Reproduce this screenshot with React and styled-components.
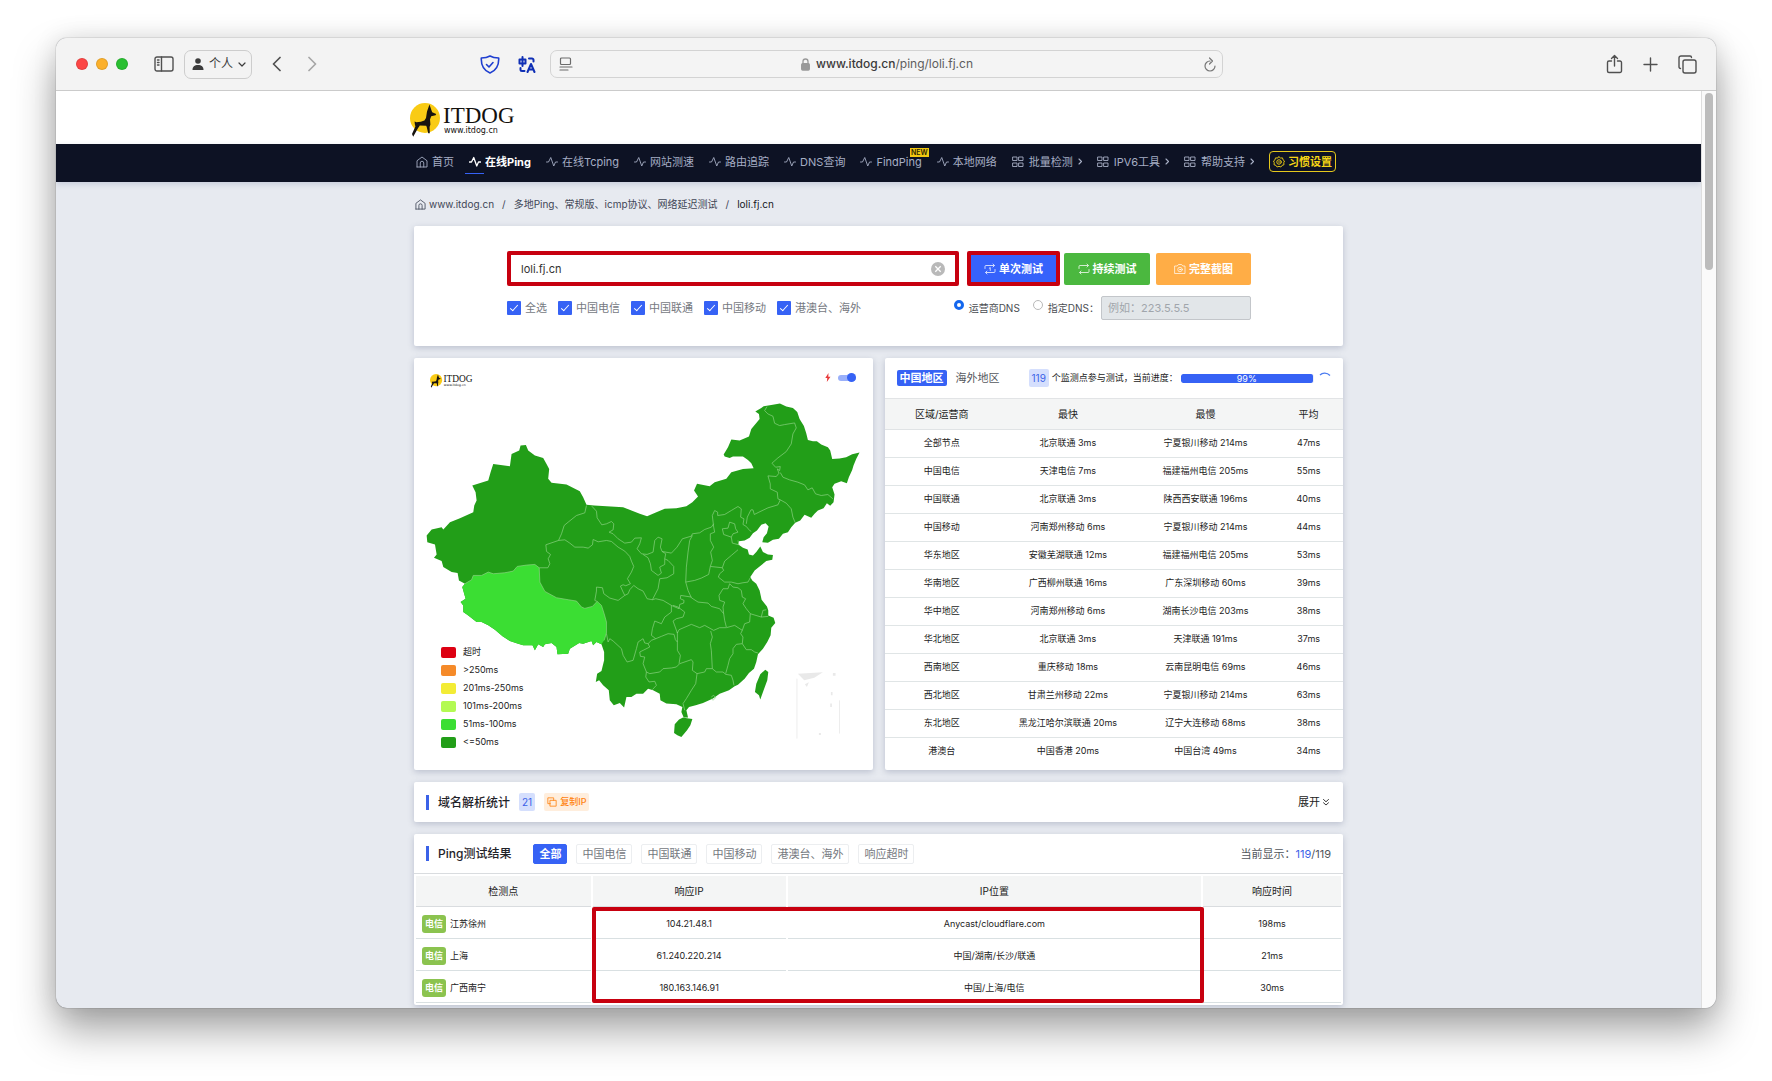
import React from "react";
import styled, { createGlobalStyle, css } from "styled-components";

const BLUE = "#3662f5";
const RED = "#c7000f";

const GlobalStyle = createGlobalStyle`
  *, *::before, *::after { box-sizing: border-box; }
  html, body, #root { height: 100%; }
  body {
    margin: 0;
    background: #fff;
    color: #222;
    font-family: Inter, "Noto Sans CJK SC", sans-serif;
    font-size: 11px;
    line-height: 16px;
    overflow: hidden;
  }
  button, input { font: inherit; color: inherit; }
  button { border: 0; background: none; padding: 0; }
  a { color: inherit; text-decoration: none; }
  svg { display: block; flex: none; }
`;

/* ---------- browser window ---------- */

const Desktop = styled.div`
  height: 100%;
  padding: 38px 56px 73px;
`;

const Window = styled.div`
  display: flex;
  flex-direction: column;
  height: 100%;
  overflow: hidden;
  border-radius: 11px;
  background: #e7eaf0;
  box-shadow: 0 0 1px rgba(0, 0, 0, 0.7), 0 0 24px rgba(0, 0, 0, 0.1), 0 22px 42px rgba(0, 0, 0, 0.36);
`;

const Toolbar = styled.header`
  display: grid;
  grid-template-columns: 1fr minmax(300px, 673px) 1fr;
  align-items: center;
  flex: none;
  height: 53px;
  border-bottom: 1px solid #cbcbcb;
  background: #f3f3f3;
`;

const LeftTools = styled.div`
  display: flex;
  align-items: center;
  gap: 10px;
  min-width: 0;
  padding: 0 14px 0 20px;
`;

const RightTools = styled.div`
  display: flex;
  align-items: center;
  justify-content: flex-end;
  gap: 20px;
  padding-right: 19px;
`;

const ToolButton = styled.button`
  display: flex;
  align-items: center;
  justify-content: center;
  color: ${(p) => p.$color || "#505050"};
`;

const Lights = styled.div`
  display: flex;
  gap: 8px;
  margin-right: 16px;
`;

const Light = styled.button`
  width: 12px;
  height: 12px;
  border-radius: 50%;
  border: 1px solid rgba(0, 0, 0, 0.1);
  background: ${(p) => p.$color};
`;

const Profile = styled.button`
  display: flex;
  align-items: center;
  gap: 5px;
  height: 29px;
  padding: 0 5px 0 7px;
  border: 1px solid #cdcdcd;
  border-radius: 7px;
  font-size: 12px;
  color: #3c3c3c;
`;

const History = styled.div`
  display: flex;
  gap: 27px;
  margin-left: 10px;
`;

const Extensions = styled.div`
  display: flex;
  align-items: center;
  gap: 18px;
  margin-left: auto;
`;

const AddressBar = styled.div`
  display: grid;
  grid-template-columns: 1fr auto 1fr;
  align-items: center;
  height: 28px;
  padding: 0 6px 0 8px;
  border: 1px solid #d3d3d3;
  border-radius: 7px;
  background: #f4f4f4;
  color: #6b6b6b;
`;

const Address = styled.span`
  display: flex;
  align-items: center;
  gap: 6px;
  font-size: 12px;
  color: #5d5d5d;
  b { font-weight: 500; color: #3a3a3a; }
`;

const AddressEnd = styled.span`
  display: flex;
  justify-content: flex-end;
`;

const Viewport = styled.div`
  display: flex;
  flex: 1;
  min-height: 0;
`;

const Page = styled.div`
  flex: 1;
  min-width: 0;
  overflow: hidden;
`;

const ScrollTrack = styled.div`
  flex: none;
  width: 15px;
  padding: 2px 3px;
  border-left: 1px solid #dedede;
  background: #fafafa;
`;

const ScrollThumb = styled.div`
  height: 177px;
  border-radius: 4px;
  background: #bcbcbc;
`;

/* ---------- site header ---------- */

const Container = styled.div`
  width: 100%;
  max-width: 929px;
  margin: 0 auto;
`;

const Brand = styled.div`
  display: flex;
  align-items: center;
  height: 53px;
  padding-top: 4px;
  background: #fff;
`;

const BrandLink = styled.a`
  display: flex;
  margin-left: -4px;
`;

const NavBar = styled.nav`
  background: #0d1224;
  box-shadow: 0 2px 6px rgba(60, 80, 130, 0.2);
`;

const NavList = styled(Container)`
  display: flex;
  align-items: center;
  gap: 15px;
  height: 38px;
  padding: 0 7px 3px 2px;
  white-space: nowrap;
`;

const NavItem = styled.a`
  position: relative;
  display: flex;
  align-items: center;
  gap: ${(p) => (p.$more ? 5 : 4)}px;
  color: #a6aec4;
  ${(p) =>
    p.$active &&
    css`
      color: #fff;
      font-weight: 700;
      &::after {
        content: "";
        position: absolute;
        left: -4px;
        bottom: -4px;
        width: 19px;
        height: 1px;
        background: ${BLUE};
      }
    `}
`;

const NewTag = styled.span`
  position: absolute;
  right: -7px;
  top: -6px;
  padding: 0 1px;
  background: #f2c811;
  color: #2b2500;
  font-size: 7px;
  font-weight: 600;
  line-height: 9px;
`;

const SettingsButton = styled.button`
  display: flex;
  align-items: center;
  gap: 3px;
  height: 21px;
  padding: 0 3px;
  margin-left: auto;
  border: 1px solid #e5c81c;
  border-radius: 4px;
  color: #f5d515;
  font-weight: 700;
`;

const Crumbs = styled(Container)`
  display: flex;
  align-items: center;
  gap: 8px;
  height: 44px;
  padding-left: 1px;
  font-size: 10px;
  color: #3f4656;
`;

const CrumbHome = styled.a`
  display: flex;
  align-items: center;
  gap: 3px;
`;

const CrumbHere = styled.span`
  color: #15181f;
`;

/* ---------- cards ---------- */

const Stack = styled(Container)`
  display: flex;
  flex-direction: column;
  gap: 12px;
`;

const Card = styled.section`
  border-radius: 2px;
  background: #fff;
  box-shadow: 0 2px 6px rgba(60, 70, 110, 0.25);
`;

const SearchCard = styled(Card)`
  padding: 25px 92px 26px 93px;
`;

const SearchRow = styled.form`
  display: flex;
  align-items: center;
`;

const SearchField = styled.label`
  display: flex;
  align-items: center;
  flex: 1;
  height: 35px;
  margin-right: 8px;
  padding: 0 10px;
  border: 4px solid ${RED};
  border-radius: 2px;
`;

const SearchInput = styled.input`
  flex: 1;
  min-width: 0;
  padding: 0;
  border: 0;
  outline: 0;
  color: #333;
`;

const ActionButton = styled.button`
  display: flex;
  align-items: center;
  justify-content: center;
  gap: 3px;
  width: ${(p) => p.$w}px;
  height: ${(p) => (p.$marked ? 35 : 32)}px;
  margin-left: ${(p) => p.$gap || 0}px;
  border: ${(p) => (p.$marked ? `4px solid ${RED}` : "0")};
  border-radius: 2px;
  background: ${(p) => p.$bg};
  color: #fff;
  font-weight: 700;
`;

const OptionRow = styled.div`
  display: flex;
  align-items: center;
  justify-content: space-between;
  margin-top: 10px;
`;

const Options = styled.div`
  display: flex;
  align-items: center;
  gap: ${(p) => p.$gap}px;
`;

const Option = styled.label`
  display: flex;
  align-items: center;
  gap: 4px;
  color: #76797f;
`;

const DnsOption = styled(Option)`
  gap: 5px;
  font-size: 10px;
  color: #4a4d52;
`;

const Check = styled.input.attrs({ type: "checkbox" })`
  appearance: none;
  position: relative;
  width: 14px;
  height: 14px;
  margin: 0;
  border-radius: 1px;
  background: ${BLUE};
  &::after {
    content: "";
    position: absolute;
    left: 5px;
    top: 2px;
    width: 4px;
    height: 8px;
    border: solid #fff;
    border-width: 0 1px 1px 0;
    transform: rotate(42deg);
  }
`;

const Radio = styled.input.attrs({ type: "radio" })`
  appearance: none;
  width: 10px;
  height: 10px;
  margin: 0 0 6px;
  border: 1px solid #b9b9b9;
  border-radius: 50%;
  background: #fff;
  &:checked { border: 3px solid #1467ee; }
`;

const DnsInput = styled.input`
  width: 150px;
  height: 24px;
  padding: 0 6px;
  border: 1px solid #c3c6ca;
  border-radius: 2px;
  background: #e2e6e9;
  font-size: 11px;
  &::placeholder { color: #a0a5ab; opacity: 1; }
`;

const Split = styled.div`
  display: grid;
  grid-template-columns: minmax(0, 1fr) minmax(0, 1fr);
  gap: 12px;
`;

/* ---------- map ---------- */

const MapCard = styled(Card)`
  position: relative;
  svg.map { width: 100%; height: auto; }
`;

const MapHead = styled.div`
  position: absolute;
  inset: 16px 17px auto 16px;
  display: flex;
  justify-content: space-between;
  align-items: flex-start;
`;

const Animate = styled.label`
  display: flex;
  align-items: center;
  gap: 7px;
  height: 7px;
`;

const Switch = styled.input.attrs({ type: "checkbox" })`
  appearance: none;
  display: flex;
  align-items: center;
  justify-content: flex-end;
  width: 18px;
  height: 6px;
  margin: 0;
  border-radius: 3px;
  background: #9ab0fa;
  &::after {
    content: "";
    flex: none;
    width: 9px;
    height: 9px;
    border-radius: 50%;
    background: ${BLUE};
  }
`;

const Legend = styled.ul`
  position: absolute;
  left: 27px;
  bottom: 19px;
  margin: 0;
  padding: 0;
  list-style: none;
`;

const LegendItem = styled.li`
  display: flex;
  align-items: center;
  gap: 7px;
  height: 18px;
  font-size: 9px;
  line-height: 18px;
  color: #222;
  &::before {
    content: "";
    width: 15px;
    height: 11px;
    border-radius: 2px;
    background: ${(p) => p.$color};
  }
`;

/* ---------- statistics ---------- */

const StatHead = styled.div`
  display: flex;
  align-items: center;
  height: 41px;
  padding: 0 12px;
  border-bottom: 1px solid #e2e4e6;
  white-space: nowrap;
`;

const RegionTab = styled.button`
  height: 16px;
  padding: 0 3px;
  margin-right: 6px;
  border-radius: 2px;
  color: ${(p) => (p.$active ? "#fff" : "#55585e")};
  background: ${(p) => (p.$active ? BLUE : "none")};
  font-weight: ${(p) => (p.$active ? 700 : 400)};
`;

const Count = styled.span`
  height: 18px;
  padding: 0 3px;
  border-radius: 2px;
  background: #d5dffd;
  color: #3b62e8;
  font-size: 10px;
  line-height: 18px;
`;

const Progress = styled.div`
  display: flex;
  align-items: center;
  flex: 1;
  margin-left: 20px;
  font-size: 9px;
`;

const ProgressText = styled.span`
  margin: 0 3px;
`;

const Bar = styled.div`
  flex: 1;
  height: 9px;
  overflow: hidden;
  border-radius: 2px;
  background: #edf0f4;
`;

const BarFill = styled.div`
  height: 100%;
  border-radius: 2px;
  background: ${BLUE};
  color: #fff;
  line-height: 9px;
  text-align: center;
`;

const Spinner = styled.svg`
  margin: 0 0 2px 5px;
`;

const StatTable = styled.table`
  width: 100%;
  border-collapse: collapse;
  table-layout: fixed;
  text-align: center;
  font-size: 9px;
  margin-bottom: 5px;
  th, td { padding: 0; }
  th {
    height: 30px;
    background: #f4f5f5;
    border-bottom: 1px solid #e0e3e5;
    font-size: 10px;
    font-weight: 400;
  }
  td {
    height: 28px;
    border-bottom: 1px solid #e0e5e6;
  }
  tr:last-child td { border-bottom: 0; }
`;

/* ---------- result panels ---------- */

const PanelHead = styled.div`
  display: flex;
  align-items: center;
  height: ${(p) => p.$h}px;
  padding: 0 12px;
  border-bottom: ${(p) => (p.$line ? "1px solid #d9dcdf" : "0")};
`;

const PanelTitle = styled.h2`
  margin: 0 9px 0 0;
  padding-left: 9px;
  border-left: 3px solid #3b62e8;
  font-size: 12px;
  font-weight: 500;
  line-height: 15px;
  color: #1f2329;
`;

const CopyButton = styled.button`
  display: flex;
  align-items: center;
  gap: 3px;
  height: 18px;
  margin-left: 9px;
  padding: 0 3px;
  border-radius: 2px;
  background: #ffeedd;
  color: #ff8412;
  font-size: 9px;
  font-weight: 500;
`;

const Expand = styled.button`
  display: flex;
  align-items: center;
  gap: 3px;
  margin-left: auto;
  margin-right: 2px;
`;

const Filters = styled.div`
  display: flex;
  gap: 9px;
  margin-left: 13px;
`;

const Filter = styled.button`
  height: 20px;
  padding: 0 5px;
  border: 1px solid ${(p) => (p.$active ? BLUE : "#eceef0")};
  border-radius: 2px;
  background: ${(p) => (p.$active ? BLUE : "#fff")};
  color: ${(p) => (p.$active ? "#fff" : "#74787e")};
  font-weight: ${(p) => (p.$active ? 700 : 400)};
  line-height: 16px;
`;

const Shown = styled.span`
  margin-left: auto;
  color: #51555b;
  b { color: #3b62e8; font-weight: 400; }
`;

const ResultWrap = styled.div`
  position: relative;
`;

const ResultTable = styled.table`
  width: 100%;
  border-spacing: 2px;
  table-layout: fixed;
  text-align: center;
  font-size: 9px;
  th, td { padding: 0; }
  th {
    height: 31px;
    border-bottom: 1px solid #d9dcdf;
    background: #f4f5f5;
    font-size: 10px;
    font-weight: 400;
  }
  td {
    height: 30px;
    border-bottom: 1px solid #d9e0e2;
  }
`;

const Place = styled.div`
  display: flex;
  align-items: center;
  gap: 4px;
  padding-left: 6px;
`;

const Carrier = styled.span`
  padding: 0 3px;
  border-radius: 3px;
  background: #8bc34f;
  color: #fff;
  font-weight: 700;
  line-height: 18px;
`;

const Highlight = styled.div`
  position: absolute;
  left: 178px;
  right: 139px;
  top: 33px;
  height: 96px;
  border: 4px solid ${RED};
  border-radius: 2px;
  pointer-events: none;
`;

/* ---------- drawings ---------- */

const Icon = ({ size = 12, width, vb = "0 0 24 24", sw = 2, children, ...rest }) => (
  <svg width={width || size} height={size} viewBox={vb} fill="none" stroke="currentColor" strokeWidth={sw} strokeLinecap="round" strokeLinejoin="round" aria-hidden="true" {...rest}>
    {children}
  </svg>
);

const HomeIcon = ({ size = 12 }) => (
  <Icon size={size} sw={1.8}>
    <path d="M2 22V9.5L12 2l10 7.500V22H2" />
    <path d="M8.500 22v-8a3.500 3.500 0 0 1 7 0v8" />
  </Icon>
);
const PulseIcon = ({ bold }) => (
  <Icon sw={bold ? 2.6 : 1.8}>
    <path d="M1 12h4L9.500 3l6 17 3.500-8h4" />
  </Icon>
);
const GridIcon = () => (
  <Icon sw={1.8}>
    <path d="M2 2h8v7H2zM14 2h8v7h-8zM2 14h8v7H2zM14 14h8v7h-8z" />
  </Icon>
);
const ChevronIcon = () => (
  <Icon width={4} size={7} vb="0 0 8 14" sw={2.2}>
    <path d="M2 2l5 5-5 5" />
  </Icon>
);
const GearIcon = () => (
  <Icon sw={1.8}>
    <path d="M12 1.500l3 2.500 4-.2 1 3.800 3 2.400-1.500 3.400.5 4-3.800 1.300-2.400 3.300-3.800-1.400-3.800 1.400-2.400-3.300L2 17.400l.5-4L1 10l3-2.400 1-3.800 4 .2z" />
    <circle cx="12" cy="12" r="4.500" />
    <path d="M12 11v2" />
  </Icon>
);
const LoopIcon = ({ once }) => (
  <Icon sw={1.5}>
    <path d="M2 11V7a2 2 0 0 1 2-2h16M18 2l3 3-3 3M22 13v4a2 2 0 0 1-2 2H4M6 22l-3-3 3-3" />
    {once && <path d="M10.500 10.500L12.500 9v6" />}
  </Icon>
);
const CameraIcon = () => (
  <Icon sw={1.4}>
    <path d="M2 6h4.500L9 3h6l2.500 3H22v15H2z" />
    <circle cx="12" cy="13" r="4.500" />
    <circle cx="12" cy="13" r="1" />
  </Icon>
);

const Logo = ({ width }) => (
  <svg width={width} viewBox="0 0 108 34" role="img" aria-label="ITDOG">
    <circle cx="15" cy="15" r="15" fill="#f9cb15" />
    <path
      fill="#17130f"
      d="M19.500 1.500L21 6l1.200 3.200 4 1.800-.6 1.300-4.400 1-1.200 3.200.4 5-.8 2.500.2 6.300h-1.600l-1.400-6-.6-1.500-6.400-.3-2 3-4.600 8.300L2 31l3.400-7.500-.6-2.500-.2-2.500 1.800.8 4.400-.6 3.600-1.200 1.600-2.500 1-6.500z"
    />
    <text x="33" y="20" fontFamily="'Liberation Serif', serif" fontSize="23" fill="#14110e">ITDOG</text>
    <text x="34" y="30" fontFamily="'DejaVu Sans', sans-serif" fontSize="8" fill="#14110e">www.itdog.cn</text>
  </svg>
);

const MAINLAND =
  "1037,183 1055,172 1062,167 1085,163 1111,159 1130,168 1150,172 1163,184 1170,205 1183,226 1190,248 1195,268 1210,272 1222,272 1235,282 1255,290 1262,300 1268,325 1290,324 1310,320 1328,311 1350,306 1340,325 1332,345 1328,358 1318,380 1312,398 1295,392 1275,400 1268,410 1275,432 1272,455 1262,466 1252,458 1242,473 1225,480 1215,490 1205,502 1185,493 1172,510 1157,517 1145,530 1135,545 1120,550 1108,565 1090,568 1075,577 1058,575 1062,560 1072,548 1077,528 1068,518 1055,523 1042,540 1030,548 1020,562 1005,570 988,572 986,582 1000,592 1014,597 1018,612 1030,615 1040,605 1052,588 1060,605 1075,612 1090,614 1088,628 1070,632 1050,648 1035,660 1022,680 1028,690 1040,700 1050,720 1056,748 1072,768 1076,780 1076,795 1092,802 1097,818 1085,832 1083,855 1073,875 1060,895 1045,912 1040,935 1033,955 1018,968 1005,985 985,1003 975,1008 958,1020 930,1030 910,1045 880,1058 858,1065 838,1070 830,1080 835,1102 822,1102 815,1085 818,1070 800,1062 770,1060 752,1050 750,1030 730,1020 715,1015 700,1030 680,1030 665,1040 650,1040 643,1072 630,1058 612,1065 600,1050 597,1020 580,1005 568,990 558,995 562,970 575,962 583,930 583,905 575,882 560,875 550,885 545,872 520,880 508,878 480,895 475,910 443,912 440,890 425,878 405,882 400,890 385,882 375,900 368,885 340,885 325,880 300,872 278,858 255,838 235,825 215,815 200,815 175,795 160,785 160,765 152,755 167,745 157,710 165,700 147,690 143,668 125,665 100,650 95,632 72,622 80,612 75,582 52,575 50,555 65,537 95,530 100,537 120,515 150,503 190,485 193,465 200,450 197,425 187,405 235,390 242,365 250,340 300,347 305,310 328,300 332,285 348,283 355,300 375,315 400,322 410,340 418,355 415,385 425,397 470,402 510,422 520,440 530,463 553,465 640,470 665,480 690,490 712,497 740,485 765,475 800,473 830,467 848,455 865,438 853,420 862,400 900,407 915,395 950,385 965,365 1000,355 1032,353 1025,338 1015,328 1000,318 970,318 960,322 945,318 942,312 955,290 965,267 990,270 1018,258 1025,235 1050,205 1048,190";

const TIBET =
  "157,710 165,700 185,688 190,675 215,675 235,665 250,670 285,667 310,662 322,648 350,644 375,642 388,652 390,695 405,723 440,742 475,748 500,752 515,770 525,774 548,768 562,753 575,765 583,790 590,815 590,848 583,870 575,882 560,875 550,885 545,872 520,880 508,878 480,895 475,910 443,912 440,890 425,878 405,882 400,890 385,882 375,900 368,885 340,885 325,880 300,872 278,858 255,838 235,825 215,815 200,815 175,795 160,785 160,765 152,755 167,745";

const BORDERS = [
  "530,465 525,487 500,495 475,515 463,525 455,550 446,570 408,583 410,603 422,612 415,625 420,640 414,652 388,652",
  "446,570 465,568 480,578 495,590 520,590 535,593 548,583 550,567 565,574 590,570 605,573 625,590 645,602 660,618 665,632 672,648 665,665 653,685 662,700 648,706 640,703 632,707 640,725 645,735 625,750 600,743 582,730 578,712 560,710 560,722 555,750 562,753",
  "546,467 560,482 562,502 576,523 590,520 605,513 612,520 610,538 598,545 610,550 625,565 645,578 665,575 675,563 695,562 690,580 682,595 695,610 712,612 730,605 735,570 745,560 757,565 752,590 757,603 785,608 802,590 818,565 845,557 848,550 870,547 885,537 905,530 912,520",
  "912,530 908,495 915,480 924,485 924,495 945,492 965,480 985,468 995,475 993,500 1003,505 1000,522 1010,528 1020,540 1025,543",
  "1010,520 1013,500 1024,478 1030,478 1034,492 1048,485 1075,472 1105,463 1112,448 1130,458 1145,475 1150,500 1157,517",
  "1072,168 1065,180 1075,190 1090,197 1095,218 1110,225 1125,222 1155,217 1160,232 1150,250 1145,280 1130,303 1105,322 1087,338 1098,350 1112,348 1110,360 1103,355 1108,368 1100,378 1075,376 1082,400 1082,415 1103,425 1105,445 1112,448",
  "1112,366 1120,380 1140,388 1165,395 1185,403 1195,418 1208,412 1218,430 1235,435 1255,432 1270,445",
  "912,530 915,545 902,550 902,570 912,590 903,605 908,630 902,648 897,672 875,683 855,690 828,695 830,650 835,605 840,570 848,555",
  "902,648 938,652 942,660 930,670 926,680 945,695 965,695 985,700 1000,697 1015,695 1022,682",
  "938,652 945,632 965,615 985,598",
  "985,570 988,583 968,578 965,560 942,552 938,535 955,533 960,515 975,520 978,535 985,545 970,550 965,560",
  "828,695 835,720 845,742 865,755 895,758 905,768 930,775 942,790 945,810 950,830",
  "942,790 940,770 945,755 930,750 928,735 940,715 955,715 960,700 970,710 985,712 995,720 998,740 1008,745 1000,760 1010,775 1022,790 1055,800 1060,780 1070,778",
  "1055,800 1076,798",
  "1022,790 1020,815 1005,820 998,840 975,825 950,832 930,832 912,840 885,825 870,832 845,822 808,838 803,848 790,812 800,805 820,800 825,785 805,770 790,765",
  "845,740 813,735 812,745 823,750 822,758 810,762 808,775 785,765 760,750 738,745 728,748 712,745 700,722 685,715 672,705 660,718 655,730 645,735",
  "728,748 745,715 750,685 772,682 792,670 792,648 775,630 765,625 765,642 750,650 755,668 745,675 725,660 722,640 715,622 700,612",
  "765,625 768,610 757,603",
  "785,765 785,785 765,800 755,820 735,812 728,835 725,855 738,865 755,858 775,850 793,852 797,868 803,875 803,845",
  "738,865 725,870 715,880 705,878 700,865 685,875 680,895 670,930 652,935 640,915 635,895 610,872 600,865 595,875 590,850",
  "715,880 720,890 700,900 690,905 692,918 705,920 700,940 710,965 720,970 750,965 760,955 785,953 800,950 810,940 845,928 850,935 848,960 862,970 858,1000 845,1020 830,1045 820,1060 825,1080",
  "803,875 803,900 812,915 808,940",
  "903,842 908,860 902,880 905,900 908,955",
  "862,970 885,965 890,955 908,955 920,965 940,965 948,972 965,975 970,990 973,1005",
  "948,970 955,945 960,925 970,910 970,895 980,882 998,880 1000,860 993,850 998,840",
  "998,880 1010,898 1025,898 1035,905 1045,908",
  "710,965 708,980 718,995 735,993 740,1005 728,1018",
  "905,1040 912,1035 918,1042 910,1050 905,1045",
];

const TIBET_EDGE =
  "165,700 185,688 190,675 215,675 235,665 250,670 285,667 310,662 322,648 350,644 375,642 388,652 390,695 405,723 440,742 475,748 500,752 515,770 525,774 548,768 562,753 575,765 583,790 590,815 590,848 583,870";

const ChinaMap = () => (
  <svg className="map" viewBox="12 22 1377 1236" role="img" aria-label="中国">
    <polygon points={MAINLAND} fill="#229e18" />
    <polygon points="820,1102 832,1104 848,1106 842,1125 832,1140 815,1160 803,1155 793,1148 795,1122 808,1108" fill="#229e18" />
    <polygon points="1067,958 1076,965 1073,990 1062,1020 1052,1048 1048,1035 1036,1025 1040,1000 1052,972" fill="#229e18" />
    <polygon points={TIBET} fill="#3bde33" />
    <g fill="none" stroke="#8fd587" strokeWidth="2" strokeLinejoin="round">
      {BORDERS.map((points) => (
        <polyline key={points} points={points} />
      ))}
      <polyline points={TIBET_EDGE} />
    </g>
    <path d="M1162 985v180M1290 1050v100" stroke="#ededed" strokeWidth="3" fill="none" />
    <path d="M1165 970l75-4-26 16-30 8zM1186 1002l12-6-6 14zM1270 968h8v8h-8zM1264 1025h5v10h-5zM1262 1060h5v10h-5zM1228 1148h6v6h-6z" fill="#e9e9e9" />
  </svg>
);

/* ---------- data ---------- */

const NAV = [
  { label: "首页", icon: <HomeIcon /> },
  { label: "在线Ping", icon: <PulseIcon bold />, active: true },
  { label: "在线Tcping", icon: <PulseIcon /> },
  { label: "网站测速", icon: <PulseIcon /> },
  { label: "路由追踪", icon: <PulseIcon /> },
  { label: "DNS查询", icon: <PulseIcon /> },
  { label: "FindPing", icon: <PulseIcon />, isNew: true },
  { label: "本地网络", icon: <PulseIcon /> },
  { label: "批量检测", icon: <GridIcon />, more: true },
  { label: "IPV6工具", icon: <GridIcon />, more: true },
  { label: "帮助支持", icon: <GridIcon />, more: true },
];

const CARRIERS = ["全选", "中国电信", "中国联通", "中国移动", "港澳台、海外"];

const LEGEND = [
  ["#dd0012", "超时"],
  ["#f58a29", ">250ms"],
  ["#f3ec35", "201ms-250ms"],
  ["#b3fa53", "101ms-200ms"],
  ["#3bde33", "51ms-100ms"],
  ["#229e18", "<=50ms"],
];

const STATS = [
  ["全部节点", "北京联通 3ms", "宁夏银川移动 214ms", "47ms"],
  ["中国电信", "天津电信 7ms", "福建福州电信 205ms", "55ms"],
  ["中国联通", "北京联通 3ms", "陕西西安联通 196ms", "40ms"],
  ["中国移动", "河南郑州移动 6ms", "宁夏银川移动 214ms", "44ms"],
  ["华东地区", "安徽芜湖联通 12ms", "福建福州电信 205ms", "53ms"],
  ["华南地区", "广西柳州联通 16ms", "广东深圳移动 60ms", "39ms"],
  ["华中地区", "河南郑州移动 6ms", "湖南长沙电信 203ms", "38ms"],
  ["华北地区", "北京联通 3ms", "天津联通 191ms", "37ms"],
  ["西南地区", "重庆移动 18ms", "云南昆明电信 69ms", "46ms"],
  ["西北地区", "甘肃兰州移动 22ms", "宁夏银川移动 214ms", "63ms"],
  ["东北地区", "黑龙江哈尔滨联通 20ms", "辽宁大连移动 68ms", "38ms"],
  ["港澳台", "中国香港 20ms", "中国台湾 49ms", "34ms"],
];

const FILTERS = ["全部", "中国电信", "中国联通", "中国移动", "港澳台、海外", "响应超时"];

const RESULTS = [
  ["江苏徐州", "104.21.48.1", "Anycast/cloudflare.com", "198ms"],
  ["上海", "61.240.220.214", "中国/湖南/长沙/联通", "21ms"],
  ["广西南宁", "180.163.146.91", "中国/上海/电信", "30ms"],
];

const PROGRESS = 99;

/* ---------- sections ---------- */

const BrowserToolbar = () => (
  <Toolbar>
    <LeftTools>
      <Lights>
        <Light $color="#fc4645" aria-label="关闭" />
        <Light $color="#fbb02b" aria-label="最小化" />
        <Light $color="#29bf31" aria-label="缩放" />
      </Lights>
      <ToolButton aria-label="边栏">
        <Icon width={20} size={16} vb="0 0 20 16" sw={1.4}>
          <rect x="1" y="1" width="18" height="14" rx="2" />
          <path d="M7.500 1v14M3.500 4h1.500M3.500 6.500h1.500M3.500 9h1.500" />
        </Icon>
      </ToolButton>
      <Profile>
        <Icon size={12} vb="0 0 12 12" fill="currentColor" stroke="none">
          <circle cx="6" cy="3" r="2.800" />
          <path d="M.5 12c0-3.500 2-5 5.500-5s5.500 1.500 5.500 5z" />
        </Icon>
        个人
        <Icon width={8} size={8} vb="0 0 8 8" sw={1.2}>
          <path d="M1 3l3 3 3-3" />
        </Icon>
      </Profile>
      <History>
        <ToolButton aria-label="后退">
          <Icon width={9} size={16} vb="0 0 9 16" sw={1.7}>
            <path d="M8 1.500L1.500 8 8 14.500" />
          </Icon>
        </ToolButton>
        <ToolButton aria-label="前进" $color="#a5a5a5">
          <Icon width={9} size={16} vb="0 0 9 16" sw={1.7}>
            <path d="M1 1.500L7.500 8 1 14.500" />
          </Icon>
        </ToolButton>
      </History>
      <Extensions>
        <ToolButton aria-label="隐私保护" $color="#1f3fd0">
          <Icon width={20} size={19} vb="0 0 20 19" sw={1.6}>
            <path d="M10 1c2.500 1.500 5.500 2 8.700 2C19 9.500 17 15 10 18 3 15 1 9.500 1.300 3 4.500 3 7.500 2.500 10 1z" />
            <path d="M6.500 9.500l2.500 2.500 4-4.500" />
          </Icon>
        </ToolButton>
        <ToolButton aria-label="翻译" $color="#0f2fb5">
          <Icon width={18} size={17} vb="0 0 18 17" sw={2}>
            <path d="M1.500 3.500h6v4h-6zM4.500 1v9M11 2.500h3a1.500 1.500 0 0 1 1.500 1.500v1.500M2.500 12v1.500A1.500 1.500 0 0 0 4 15h2.500M9.500 16l3.500-8 3.500 8M10.800 13.500h4.500" />
          </Icon>
        </ToolButton>
      </Extensions>
    </LeftTools>
    <AddressBar>
      <Icon width={14} size={14} vb="0 0 14 14" sw={1.2}>
        <rect x="1.500" y="1" width="10" height="6.500" rx="1" />
        <path d="M1 10h12M1 13h8" />
      </Icon>
      <Address>
        <Icon width={9} size={13} vb="0 0 9 13" sw={1.3} stroke="#999">
          <path d="M2 6V3.500a2.500 2.500 0 0 1 5 0V6" />
          <rect x=".7" y="5.700" width="7.600" height="6.300" rx="1" fill="#999" />
        </Icon>
        <span>
          <b>www.itdog.cn</b>/ping/loli.fj.cn
        </span>
      </Address>
      <AddressEnd>
        <ToolButton aria-label="重新载入" $color="#777">
          <Icon width={12} size={15} vb="0 0 12 15" sw={1.2}>
            <path d="M6 4a5 5 0 1 0 5 5M5.500 1l3 3-3 3" />
          </Icon>
        </ToolButton>
      </AddressEnd>
    </AddressBar>
    <RightTools>
      <ToolButton aria-label="共享">
        <Icon width={17} size={20} vb="0 0 17 20" sw={1.4}>
          <path d="M5.500 7H3a1.500 1.500 0 0 0-1.500 1.500v8.500A1.500 1.500 0 0 0 3 18.500h11a1.500 1.500 0 0 0 1.500-1.500V8.500A1.500 1.500 0 0 0 14 7h-2.500M8.500 12V1.500M5.500 4.500l3-3 3 3" />
        </Icon>
      </ToolButton>
      <ToolButton aria-label="新建标签页">
        <Icon width={15} size={15} vb="0 0 15 15" sw={1.4}>
          <path d="M7.500 1v13M1 7.500h13" />
        </Icon>
      </ToolButton>
      <ToolButton aria-label="标签页概览">
        <Icon width={19} size={19} vb="0 0 19 19" sw={1.4}>
          <rect x="5" y="5" width="13" height="13" rx="2" />
          <path d="M2.500 13.500A1.500 1.500 0 0 1 1 12V3a2 2 0 0 1 2-2h9a1.500 1.500 0 0 1 1.500 1.500" />
        </Icon>
      </ToolButton>
    </RightTools>
  </Toolbar>
);

const SiteHeader = () => (
  <header>
    <Brand>
      <Container>
        <BrandLink href="#" aria-label="ITDOG">
          <Logo width={108} />
        </BrandLink>
      </Container>
    </Brand>
    <NavBar>
      <NavList>
        {NAV.map((n) => (
          <NavItem key={n.label} href="#" $active={n.active} $more={n.more}>
            {n.icon}
            {n.label}
            {n.more && <ChevronIcon />}
            {n.isNew && <NewTag>NEW</NewTag>}
          </NavItem>
        ))}
        <SettingsButton>
          <GearIcon />
          习惯设置
        </SettingsButton>
      </NavList>
    </NavBar>
  </header>
);

const Search = () => (
  <SearchCard>
    <SearchRow onSubmit={(e) => e.preventDefault()}>
      <SearchField>
        <SearchInput aria-label="域名" defaultValue="loli.fj.cn" />
        <ToolButton type="button" aria-label="清除">
          <svg width="14" height="14" viewBox="0 0 14 14">
            <circle cx="7" cy="7" r="7" fill="#b9b9b9" />
            <path d="M4.300 4.300l5.400 5.400M9.700 4.300L4.300 9.700" stroke="#fff" strokeWidth="1.300" />
          </svg>
        </ToolButton>
      </SearchField>
      <ActionButton $w={93} $bg="#3662fb" $marked>
        <LoopIcon once />
        单次测试
      </ActionButton>
      <ActionButton type="button" $w={86} $gap={4} $bg="#4bb83f">
        <LoopIcon />
        持续测试
      </ActionButton>
      <ActionButton type="button" $w={95} $gap={6} $bg="#ffad46">
        <CameraIcon />
        完整截图
      </ActionButton>
    </SearchRow>
    <OptionRow>
      <Options $gap={11}>
        {CARRIERS.map((c) => (
          <Option key={c}>
            <Check defaultChecked />
            {c}
          </Option>
        ))}
      </Options>
      <Options $gap={13}>
        <DnsOption>
          <Radio name="dns" defaultChecked />
          运营商DNS
        </DnsOption>
        <Options $gap={2}>
          <DnsOption>
            <Radio name="dns" />
            指定DNS：
          </DnsOption>
          <DnsInput aria-label="指定DNS" placeholder="例如：223.5.5.5" disabled />
        </Options>
      </Options>
    </OptionRow>
  </SearchCard>
);

const MapPanel = () => (
  <MapCard>
    <ChinaMap />
    <MapHead>
      <Logo width={44} />
      <Animate>
        <svg width="6" height="9" viewBox="0 0 6 9">
          <path d="M3.500 0L.3 5h2L1.800 9l3.700-5.200H3.300z" fill="#e83a3a" />
        </svg>
        <Switch defaultChecked aria-label="动画" />
      </Animate>
    </MapHead>
    <Legend>
      {LEGEND.map(([color, label]) => (
        <LegendItem key={label} $color={color}>
          {label}
        </LegendItem>
      ))}
    </Legend>
  </MapCard>
);

const StatsPanel = () => (
  <Card>
    <StatHead>
      <RegionTab $active>中国地区</RegionTab>
      <RegionTab>海外地区</RegionTab>
      <Progress>
        <Count>119</Count>
        <ProgressText>个监测点参与测试，当前进度：</ProgressText>
        <Bar>
          <BarFill style={{ width: `${PROGRESS}%` }}>{PROGRESS}%</BarFill>
        </Bar>
        <Spinner width="12" height="12" viewBox="0 0 12 12" fill="none" stroke="#4b7cf0" strokeWidth="1.300">
          <path d="M1 4C3.500 1.500 8 1.500 11 4.500" />
        </Spinner>
      </Progress>
    </StatHead>
    <StatTable>
      <colgroup>
        <col width="25%" />
        <col width="30%" />
        <col width="30%" />
        <col width="15%" />
      </colgroup>
      <thead>
        <tr>
          <th>区域/运营商</th>
          <th>最快</th>
          <th>最慢</th>
          <th>平均</th>
        </tr>
      </thead>
      <tbody>
        {STATS.map((row) => (
          <tr key={row[0]}>
            {row.map((cell, i) => (
              <td key={i}>{cell}</td>
            ))}
          </tr>
        ))}
      </tbody>
    </StatTable>
  </Card>
);

const DomainPanel = () => (
  <Card>
    <PanelHead $h={40}>
      <PanelTitle>域名解析统计</PanelTitle>
      <Count>21</Count>
      <CopyButton>
        <Icon size={10} sw={2}>
          <path d="M8 8h14v14H8zM16 8V2H2v14h6" />
        </Icon>
        复制IP
      </CopyButton>
      <Expand>
        展开
        <Icon width={6} size={7} vb="0 0 12 14" sw={1.8}>
          <path d="M1 1l5 4.500L11 1M1 7.500L6 12l5-4.500" />
        </Icon>
      </Expand>
    </PanelHead>
  </Card>
);

const ResultsPanel = () => (
  <Card>
    <PanelHead $h={40} $line>
      <PanelTitle>Ping测试结果</PanelTitle>
      <Filters>
        {FILTERS.map((f, i) => (
          <Filter key={f} $active={i === 0}>
            {f}
          </Filter>
        ))}
      </Filters>
      <Shown>
        当前显示：<b>119</b>/119
      </Shown>
    </PanelHead>
    <ResultWrap>
      <ResultTable>
        <colgroup>
          <col width="19%" />
          <col width="21%" />
          <col width="45%" />
          <col width="15%" />
        </colgroup>
        <thead>
          <tr>
            <th>检测点</th>
            <th>响应IP</th>
            <th>IP位置</th>
            <th>响应时间</th>
          </tr>
        </thead>
        <tbody>
          {RESULTS.map(([place, ip, where, time]) => (
            <tr key={place}>
              <td>
                <Place>
                  <Carrier>电信</Carrier>
                  {place}
                </Place>
              </td>
              <td>{ip}</td>
              <td>{where}</td>
              <td>{time}</td>
            </tr>
          ))}
        </tbody>
      </ResultTable>
      <Highlight />
    </ResultWrap>
  </Card>
);

export default function App() {
  return (
    <Desktop>
      <GlobalStyle />
      <Window>
        <BrowserToolbar />
        <Viewport>
          <Page>
            <SiteHeader />
            <Crumbs as="nav">
              <CrumbHome href="#">
                <HomeIcon size={11} />
                www.itdog.cn
              </CrumbHome>
              <span>/</span>
              <a href="#">多地Ping、常规版、icmp协议、网络延迟测试</a>
              <span>/</span>
              <CrumbHere>loli.fj.cn</CrumbHere>
            </Crumbs>
            <Stack as="main">
              <Search />
              <Split>
                <MapPanel />
                <StatsPanel />
              </Split>
              <DomainPanel />
              <ResultsPanel />
            </Stack>
          </Page>
          <ScrollTrack>
            <ScrollThumb />
          </ScrollTrack>
        </Viewport>
      </Window>
    </Desktop>
  );
}
